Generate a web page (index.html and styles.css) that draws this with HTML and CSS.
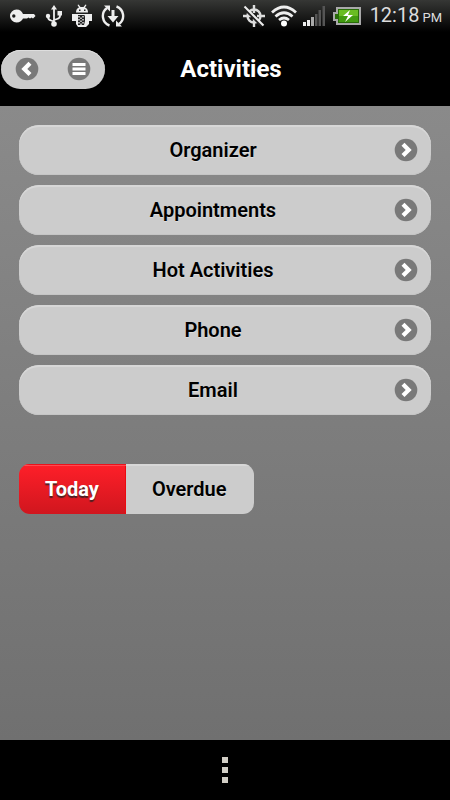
FILE: index.html
```html
<!DOCTYPE html>
<html lang="en">
<head>
<meta charset="utf-8">
<meta name="viewport" content="width=device-width, initial-scale=1">
<title>Activities</title>
<link rel="stylesheet" href="styles.css">
</head>
<body>
<svg class="defs" aria-hidden="true">
  <symbol id="chevron" viewBox="0 0 24 24">
    <circle cx="12" cy="12" r="11.3" fill="#797979"/>
    <path d="M9 6.200l5.700 5.700-5.700 5.700" fill="none" stroke="#fff" stroke-width="4.2"/>
  </symbol>
</svg>
<div class="status">
  <div class="status-group notices">
    <svg width="26" height="14" viewBox="0 0 26 14" aria-hidden="true"><path fill="#eee" fill-rule="evenodd" d="M6.500 .5C10 .5 12 2.500 13 5H24L25.500 7L23 9.500L21.500 8.500L20 9.500L18.500 8.500L17 9.500H13C12 11.500 10 13.500 6.500 13.500A6.500 6.500 0 0 1 6.500 .5ZM3.800 5.300A1.700 1.700 0 1 0 3.800 8.700A1.700 1.700 0 1 0 3.800 5.300Z"/></svg>
    <svg width="18" height="24" viewBox="0 0 18 24" aria-hidden="true"><g fill="none" stroke="#eee" stroke-width="1.800"><path d="M9 4V19M3 13q0 2.500 3 3.500l3 1M15 10v2q0 2-3 3l-3 1"/></g><g fill="#eee"><path d="M9 1l3 4.500H6z"/><circle cx="3" cy="12" r="2.200"/><path d="M12.500 7h4.500v4.500h-4.500z"/><circle cx="9" cy="20" r="2.800"/></g></svg>
    <svg width="20" height="24" viewBox="0 0 20 24" aria-hidden="true"><path fill="#eee" d="M4 8.500Q4 4.500 7 3.500L5.500 1l1-.5L8.500 3h3l2-2.500 1 .5L13 3.500q3 1 3 5zM0 10h20v7h-3v3l-3 3H6l-2-3v-3H0z"/><path fill="#222" d="M7 5.500h1.500v1.500H7zM12 5.500h1.500v1.500H12zM6 11h6q1 0 1 2v4l-1 4H6z"/><path d="M7 12v9M9 13.500v8M11 12v9" stroke="#ddd" stroke-width="1.500" stroke-dasharray="1.500 1.500"/></svg>
    <svg width="24" height="24" viewBox="0 0 24 24" aria-hidden="true"><g fill="none" stroke="#eee" stroke-width="2.400"><path d="M8.500 21.500A10 10 0 0 1 6 4M15.500 2.500A10 10 0 0 1 18 20"/></g><path fill="#eee" d="M3 1.500h6v6zM21 22.500h-6v-6zM10.500 6h3v6h4L12 18.500 6.500 12h4z"/></svg>
  </div>
  <div class="status-group">
    <svg width="22" height="22" viewBox="0 0 22 22" aria-hidden="true"><g fill="none" stroke="#ddd" stroke-width="2.400"><circle cx="11" cy="11" r="6.500"/><path d="M11 0v8M11 14v8M0 11h8M14 11h8"/></g><path d="M2 4l17 17" stroke="#222" stroke-width="3"/><path d="M1.500 1.500l19 19" stroke="#eee" stroke-width="2"/></svg>
    <svg class="wifi" width="26" height="22" viewBox="0 0 26 22" aria-hidden="true"><g fill="none" stroke="#eee" stroke-width="2.800"><path d="M1 7.500q12-11 24 0M4.500 11.500q8.500-7.500 17 0M8 15q5-4 10 0"/></g><circle cx="13" cy="18.500" r="3" fill="#fff"/></svg>
    <svg class="signal" width="22" height="20" viewBox="0 0 22 20" aria-hidden="true"><path fill="#eee" d="M0 16h3v4H0zM4 14h3v6H4z"/><path fill="#aaa" d="M8 11h3v9H8z"/><path fill="#555" d="M12 8h2.500v12H12zM15.500 4H18v16h-2.500zM19.500 0H22v20h-2.500z"/></svg>
    <svg class="battery" width="28" height="18" viewBox="0 0 28 18" aria-hidden="true"><path fill="#a9a9a9" d="M3 0h25v18H3v-4H0V5h3z"/><path fill="#286b08" d="M5 2h21v14H5v-4H2V7h3z"/><path fill="#69bd22" d="M6 3h19v6H6z"/><path fill="#429b10" d="M6 9h19v6H6z"/><path fill="#fff" d="M17 3l-7 6h5l-3 6 8-7h-5z"/></svg>
    <time class="clock">12:18<span class="meridiem">PM</span></time>
  </div>
</div>
<header class="header">
  <div class="nav">
    <button class="nav-button" type="button" aria-label="Back"><svg class="flip" width="24" height="24"><use href="#chevron"/></svg></button>
    <button class="nav-button" type="button" aria-label="Menu"><svg width="24" height="24" viewBox="0 0 24 24"><circle cx="12" cy="12" r="11.300" fill="#797979"/><path d="M5.500 7.500h13M5.500 12h13M5.500 16.500h13" stroke="#fff" stroke-width="3"/></svg></button>
  </div>
  <h1 class="title">Activities</h1>
</header>
<main class="content">
  <nav class="list">
    <a class="row" href="#organizer"><span class="label">Organizer</span><svg width="24" height="24"><use href="#chevron"/></svg></a>
    <a class="row" href="#appointments"><span class="label">Appointments</span><svg width="24" height="24"><use href="#chevron"/></svg></a>
    <a class="row" href="#hot"><span class="label">Hot Activities</span><svg width="24" height="24"><use href="#chevron"/></svg></a>
    <a class="row" href="#phone"><span class="label">Phone</span><svg width="24" height="24"><use href="#chevron"/></svg></a>
    <a class="row" href="#email"><span class="label">Email</span><svg width="24" height="24"><use href="#chevron"/></svg></a>
  </nav>
  <div class="segments">
    <button class="segment active" type="button" aria-pressed="true">Today</button>
    <button class="segment" type="button" aria-pressed="false">Overdue</button>
  </div>
</main>
<footer class="footer">
  <button class="more" type="button" aria-label="More options"><svg width="6" height="28" viewBox="0 0 6 28"><path fill="#d2cec6" d="M0 1h6v6H0zM0 11h6v6H0zM0 21h6v6H0z"/></svg></button>
</footer>
</body>
</html>
```
FILE: styles.css
```css
* { box-sizing: border-box; }

body {
  margin: 0;
  min-height: 100vh;
  display: flex;
  flex-direction: column;
  background: #000;
  font-family: Roboto, "Liberation Sans", sans-serif;
}

button {
  margin: 0;
  border: 0;
  padding: 0;
  background: none;
  font: inherit;
}

svg { display: block; flex: none; }
.defs { position: absolute; width: 0; height: 0; }
.flip { transform: scaleX(-1); }

.status {
  height: 32px;
  display: flex;
  justify-content: space-between;
  align-items: center;
  padding: 0 8px 0 10px;
  background: linear-gradient(#363735, #000);
}

.status-group { display: flex; align-items: center; }
.notices { gap: 9px; }
.wifi { margin-left: 6px; }
.signal { margin-left: 6px; }
.battery { margin-left: 8px; }

.clock {
  display: flex;
  align-items: baseline;
  gap: 3px;
  margin-left: 9px;
  color: #ddd;
  font-size: 20px;
  line-height: 32px;
}

.meridiem { font-size: 13px; }

.header {
  height: 74px;
  display: grid;
  grid-template-columns: 104px 1fr 104px;
  align-items: center;
  padding: 0 1px;
}

.nav {
  height: 39px;
  display: flex;
  align-items: center;
  border-radius: 20px;
  background: #cbcbcb;
  box-shadow: inset 0 1px #dedede;
}

.nav-button {
  flex: 1;
  display: flex;
  justify-content: center;
}

.title {
  margin: 0;
  padding-left: 12px;
  text-align: center;
  color: #fff;
  font-size: 24px;
  line-height: 32px;
  font-weight: 700;
}

.content {
  flex: 1;
  padding: 19px;
  background: linear-gradient(#8a8a8a, #707070);
}

.list {
  display: flex;
  flex-direction: column;
  gap: 10px;
}

.row {
  height: 50px;
  display: flex;
  align-items: center;
  padding: 0 13px;
  border-radius: 20px;
  background: #ccc;
  box-shadow: inset 0 2px #d7d7d7, inset 0 -1px #c5c5c5;
  color: #000;
  text-decoration: none;
}

.label { flex: 1; text-align: center; }

.label,
.segment {
  font-size: 20px;
  line-height: 24px;
  font-weight: 600;
  text-shadow: 0 1px #ddd;
}

.segments {
  width: fit-content;
  height: 50px;
  display: flex;
  margin-top: 49px;
  border-radius: 11px;
  overflow: hidden;
}

.segment {
  padding: 0 27px 0 26px;
  background: #ccc;
  box-shadow: inset 0 2px #d7d7d7;
  color: #000;
}

.segment.active {
  background: linear-gradient(#ff1f29, #d0161e);
  box-shadow: inset 0 1px #e8141c, inset 0 2px #ff4a52, inset -1px 0 #ed0910;
  color: #fff;
  font-weight: 700;
  text-shadow: 0 2px 1px #4b2022;
}

.footer {
  height: 60px;
  display: flex;
  align-items: center;
  justify-content: center;
}
```
